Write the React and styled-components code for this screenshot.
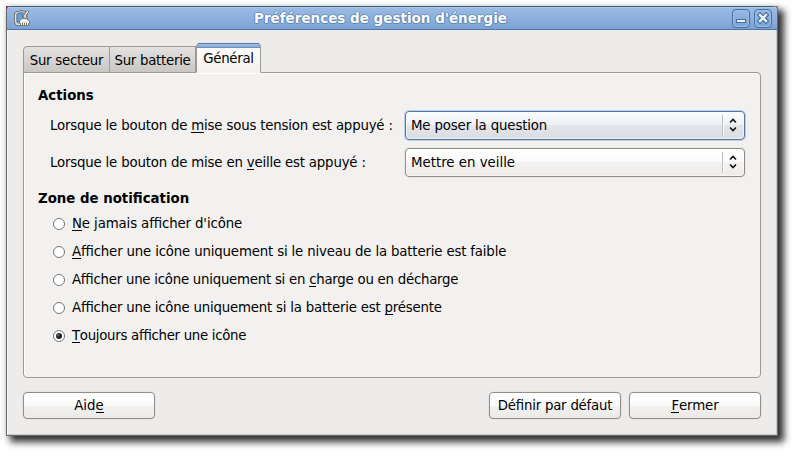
import React from "react";
import styled, { createGlobalStyle } from "styled-components";

const Global = createGlobalStyle`
  * { box-sizing: border-box; }
  html, body { margin: 0; background: #fff; overflow: hidden; }
  body { font: 13.33px/16px "DejaVu Sans", sans-serif; font-feature-settings: "liga" 1; color: #000; }
  u { text-decoration: none; box-shadow: 0 1px #000; display: inline-block; height: 14px; }
`;

const Desktop = styled.div`
  width: 798px;
  height: 456px;
  padding: 6px;
  background: #fff;
`;

const Corners = styled.div`
  width: 772px;
  height: 430px;
  background: linear-gradient(90deg, #7c3452 50%, #c0667c 50%) top / 100% 6px no-repeat;
  box-shadow: 5px 5px 7px 1px rgba(0, 0, 0, 0.8), 0 0 5px rgba(0, 0, 0, 0.13);
`;

const Window = styled.main`
  height: 430px;
  display: flex;
  flex-direction: column;
  border: 1px solid #686866;
  border-top: 0;
  border-radius: 5px 5px 0 0;
  overflow: hidden;
  background: #edeceb;
`;

const TitleBar = styled.header`
  height: 24px;
  flex: none;
  display: flex;
  align-items: center;
  padding: 0 5px 0 6px;
  border-top: 1px solid #3d6079;
  border-bottom: 1px solid #4b76ab;
  background: linear-gradient(#9dbce4, #8fb1df 45%, #7ca1d2);
  box-shadow: inset 0 1px #adc8eb;
`;

const Title = styled.h1`
  flex: 1;
  margin: 0;
  padding: 0 0 1px 2px;
  text-align: center;
  font: bold 13.5px/20px "DejaVu Sans", sans-serif;
  color: #fff;
  text-shadow: 1px 0 #5c87bd, -1px 0 #5c87bd, 0 1px #5c87bd, 0 -1px #6d96ca;
`;

const WindowButton = styled.button`
  width: 18px;
  height: 19px;
  margin-left: 4px;
  padding: 0;
  display: grid;
  place-items: center;
  border: 1px solid #416fa6;
  border-radius: 4px;
  background: linear-gradient(#98b8e2, #7da2d3);
  box-shadow: inset 0 0 0 1px #a0bfe6;
`;

const Body = styled.div`
  flex: 1;
  display: flex;
  flex-direction: column;
  padding: 13px 16px 0;
  box-shadow: inset 1px 0 #f9f8f7, inset -1px -1px #cccbc9;
`;

const Tabs = styled.nav`
  height: 30px;
  display: flex;
  align-items: flex-end;
  z-index: 1;
  margin-bottom: -1px;
`;

const Tab = styled.div`
  width: ${(p) => p.$width}px;
  height: 27px;
  padding-top: 6px;
  text-align: center;
  white-space: nowrap;
  letter-spacing: -0.27px;
  border: 1px solid #9c9a96;
  border-left-width: ${(p) => (p.$joined ? 0 : 1)}px;
  border-radius: ${(p) => (p.$joined ? "0" : "4px 0 0 0")};
  background: linear-gradient(#e3e2e1, #c9c7c4);
  ${(p) =>
    p.$active &&
    `height: 30px;
     padding-top: 7px;
     border-color: #55799f #9c9a96 #f2f1f0;
     border-radius: 4px 4px 0 0;
     background: linear-gradient(#a3c2e9, #86abd9 3px, #7392b8 3px 4px, #fcfcfc 4px, #f2f1f0 100%);`}
`;

const Panel = styled.section`
  height: 306px;
  padding: 15px 15px 0 14px;
  border: 1px solid #9c9a96;
  border-radius: 0 4px 4px 4px;
  background: #f2f1f0;
  box-shadow: inset 1px 1px #fff;
`;

const Heading = styled.h2`
  margin: ${(p) => p.$gap || 0}px 0 0;
  font-size: 13.33px;
  font-weight: bold;
  line-height: 16px;
`;

const Field = styled.div`
  display: flex;
  align-items: flex-start;
  height: 30px;
  margin: 7px 0 0 12px;
`;

const FieldLabel = styled.label`
  width: 355px;
  padding-top: 7px;
  white-space: pre;
  letter-spacing: -0.19px;
`;

const Select = styled.div`
  flex: 1;
  height: 29px;
  display: flex;
  align-items: center;
  padding: 0 6px 0 5px;
  border: 1px solid ${(p) => (p.$focused ? "#54779f" : "#8f8d88")};
  border-radius: 4px;
  background: ${(p) =>
    p.$focused
      ? "linear-gradient(#fafcfe, #edf1f6 50%, #e2e6eb 50%, #dadde2)"
      : "linear-gradient(#fff, #fbfbfb 50%, #f4f3f2 50%, #ecebe9)"};
  box-shadow: ${(p) => (p.$focused ? "0 0 0 1px #bccfe6" : "0 0 0 1px #e9e8e6")}, inset 0 0 0 1px #ffffff88;
`;

const SelectValue = styled.span`
  flex: 1;
  letter-spacing: ${(p) => p.$tracking || 0}px;
`;

const Arrows = styled.span`
  height: 21px;
  padding: 0 0 1px 5px;
  display: flex;
  align-items: center;
  border-left: 1px solid #bdbcba;
  box-shadow: inset 1px 0 #fff;
`;

const Options = styled.div`
  margin-left: 15px;
  padding-top: 3px;
`;

const Option = styled.label`
  height: 28px;
  padding-bottom: 1px;
  display: flex;
  align-items: center;
  gap: 7px;
  letter-spacing: ${(p) => p.$tracking}px;
`;

const Radio = styled.span`
  width: 12px;
  height: 12px;
  margin-top: 1px;
  display: grid;
  place-items: center;
  border: 1px solid #777673;
  border-radius: 50%;
  background: #fff;
  &::after {
    content: "";
    width: 6px;
    height: 6px;
    border-radius: 50%;
    background: ${(p) => (p.$checked ? "radial-gradient(circle at 35% 35%, #666, #1b1b1b 45%)" : "none")};
  }
`;

const Footer = styled.footer`
  display: flex;
  margin-top: 14px;
  gap: 8px;
`;

const Button = styled.button`
  width: 132px;
  height: 27px;
  padding: 1px 0 0;
  font: inherit;
  font-feature-settings: inherit;
  letter-spacing: ${(p) => p.$tracking || 0}px;
  color: #000;
  border: 1px solid #8f8d88;
  border-radius: 4px;
  background: linear-gradient(#fff, #fafafa 50%, #f3f2f1 50%, #ebeae8);
  box-shadow: 0 0 0 1px #e6e5e3;
  &:first-child { margin-right: auto; }
`;

const BatteryIcon = () => (
  <svg width="18" height="18" viewBox="0 0 18 18">
    <path d="M3 2.5H6L7 1.5H10L11 2.5H14V15L12 16.5H3L1.5 14V4Z" fill="#a9bdcb" stroke="#77786f" />
    <path d="M3 4.5L5 3.5M2.5 5V13L4 15.5H7" fill="none" stroke="#e4e3db" />
    <path d="M4 5L6 4H10V8L8 13H4Z" fill="#6d9bd3" stroke="#54789f" />
    <path d="M11.5 9L10 7L12 5V4L14.5 1.5L16 3L14 5L13 7L14 9" fill="#e8e8e2" stroke="#777972" />
    <path d="M6.5 12L9 9.5H13L16.5 12V14.5H15.5V16.5H7.5V14.5H6.5Z" fill="#f5f5f1" stroke="#777972" />
    <path d="M9.5 13.5V17M11.5 13.5V17M13.5 13.5V17" stroke="#777972" />
  </svg>
);

const ArrowIcon = () => (
  <svg width="10" height="14" viewBox="0 0 10 14">
    <path d="M2 4.5L5 1.5L8 4.5M2 9.5L5 12.5L8 9.5" fill="none" stroke="#111" strokeWidth="1.6" />
  </svg>
);

const MinimizeIcon = () => (
  <svg width="16" height="16" viewBox="0 0 16 16">
    <rect x="3.5" y="9.5" width="9" height="3" fill="#edf4fc" stroke="#426fa5" />
  </svg>
);

const CloseIcon = () => (
  <svg width="16" height="16" viewBox="0 0 16 16">
    <path d="M5 5L11 11M11 5L5 11" stroke="#426fa5" strokeWidth="4.6" strokeLinecap="square" />
    <path d="M5 5L11 11M11 5L5 11" stroke="#f0f5fc" strokeWidth="2.4" strokeLinecap="square" />
  </svg>
);

const choices = [
  { tracking: -0.12, label: <><u>N</u>e jamais afficher d'icône</> },
  { tracking: -0.17, label: <><u>A</u>fficher une icône uniquement si le niveau de la batterie est faible</> },
  { tracking: -0.25, label: <>Afficher une icône uniquement si en <u>c</u>harge ou en décharge</> },
  { tracking: -0.21, label: <>Afficher une icône uniquement si la batterie est <u>p</u>résente</> },
  { tracking: -0.3, label: <><u>T</u>oujours afficher une icône</>, checked: true },
];

export default function App() {
  return (
    <Desktop>
      <Global />
      <Corners>
        <Window>
          <TitleBar>
            <BatteryIcon />
            <Title>Préférences de gestion d'énergie</Title>
            <WindowButton aria-label="Réduire"><MinimizeIcon /></WindowButton>
            <WindowButton aria-label="Fermer la fenêtre"><CloseIcon /></WindowButton>
          </TitleBar>
          <Body>
            <Tabs>
              <Tab $width={87}>Sur secteur</Tab>
              <Tab $width={86} $joined>Sur batterie</Tab>
              <Tab $width={65} $active>Général</Tab>
            </Tabs>
            <Panel>
              <Heading>Actions</Heading>
              <Field>
                <FieldLabel>Lorsque le bouton de <u>m</u>ise sous tension est appuyé :</FieldLabel>
                <Select $focused><SelectValue $tracking={-0.15}>Me poser la question</SelectValue><Arrows><ArrowIcon /></Arrows></Select>
              </Field>
              <Field>
                <FieldLabel>Lorsque le bouton de mise en <u>v</u>eille est appuyé :</FieldLabel>
                <Select><SelectValue>Mettre en veille</SelectValue><Arrows><ArrowIcon /></Arrows></Select>
              </Field>
              <Heading $gap={13}>Zone de notification</Heading>
              <Options>
                {choices.map(({ tracking, label, checked }, i) => (
                  <Option key={i} $tracking={tracking}><Radio $checked={checked} /><span>{label}</span></Option>
                ))}
              </Options>
            </Panel>
            <Footer>
              <Button>Aid<u>e</u></Button>
              <Button $tracking={-0.22}>Définir par défaut</Button>
              <Button $tracking={-0.1}><u>F</u>ermer</Button>
            </Footer>
          </Body>
        </Window>
      </Corners>
    </Desktop>
  );
}
